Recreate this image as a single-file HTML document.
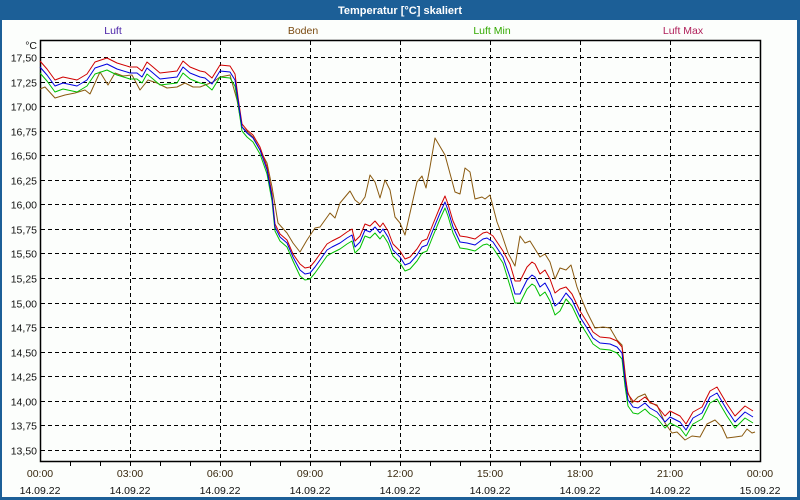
<!DOCTYPE html>
<html><head><meta charset="utf-8"><style>
html,body{margin:0;padding:0;width:800px;height:500px;overflow:hidden;background:#fff}
svg text{font-family:"Liberation Sans",sans-serif;font-size:10.5px}
</style></head><body>
<svg id="s" width="800" height="500" xmlns="http://www.w3.org/2000/svg">
<rect x="0" y="0" width="800" height="500" fill="#1c5f97"/>
<rect x="2" y="20" width="795" height="477" fill="#fcfefc"/>
<text x="400" y="14" fill="#fff" font-weight="bold" text-anchor="middle" style="font-size:11px">Temperatur [°C] skaliert</text>
<text x="113" y="34" fill="#4b22a8" text-anchor="middle">Luft</text>
<text x="303" y="34" fill="#7a4a10" text-anchor="middle">Boden</text>
<text x="492" y="34" fill="#33aa00" text-anchor="middle">Luft Min</text>
<text x="683" y="34" fill="#b0205a" text-anchor="middle">Luft Max</text>
<g id="grid" stroke="#000" stroke-width="1" stroke-dasharray="4,3" fill="none"></g>
<g id="lab"></g>
<rect x="40.5" y="40.5" width="720" height="421" fill="none" stroke="#000" stroke-width="1.5"/>
<g id="lines" fill="none" stroke-width="1" stroke-linejoin="round"></g>
</svg>
<script>
var ns="http://www.w3.org/2000/svg";
function el(p,t,a,txt){var e=document.createElementNS(ns,t);for(var k in a)e.setAttribute(k,a[k]);if(txt)e.textContent=txt;document.getElementById(p).appendChild(e);return e;}
var vals=["17,50","17,25","17,00","16,75","16,50","16,25","16,00","15,75","15,50","15,25","15,00","14,75","14,50","14,25","14,00","13,75","13,50"];
for(var i=0;i<17;i++){var y=Math.round(57+i*24.56)+0.5;el("grid","line",{x1:41,y1:y,x2:760,y2:y});el("lab","text",{x:37,y:y+4,"text-anchor":"end",fill:"#111"},vals[i]);}
el("lab","text",{x:37,y:49,"text-anchor":"end",fill:"#111"},"°C");
var times=["00:00","03:00","06:00","09:00","12:00","15:00","18:00","21:00","00:00"];
for(var j=0;j<9;j++){var x=40+j*90;if(j>0&&j<8)el("grid","line",{x1:x+0.5,y1:41,x2:x+0.5,y2:461});
el("lab","text",{x:x,y:477,"text-anchor":"middle",fill:"#3a2a10"},times[j]);
el("lab","text",{x:x,y:494,"text-anchor":"middle",fill:"#111"},j==8?"15.09.22":"14.09.22");}
for(var h=1;h<24;h++){var x=40+h*30+0.5;el("lab","line",{x1:x,y1:461,x2:x,y2:466,stroke:"#000"});}
var blue=[[40,67],[47,75],[55,86],[63,83],[77,86],[87,80],[95,68],[107,64],[117,69],[130,73],[137,73],[142,77],[147,68],[153,73],[160,79],[177,77],[183,67],[190,73],[200,77],[205,78],[212,84],[220,71],[230,72],[235,80],[238,100],[242,127],[247,133],[253,138],[260,150],[267,170],[272,197],[275,227],[280,237],[287,243],[293,257],[300,270],[305,274],[310,273],[315,267],[320,260],[327,250],[332,247],[340,243],[347,238],[352,235],[355,247],[360,242],[365,230],[370,232],[375,227],[380,233],[383,229],[388,237],[393,250],[400,257],[405,265],[410,263],[417,255],[422,247],[427,245],[433,230],[440,213],[445,202],[448,210],[453,227],[460,242],[467,243],[475,245],[483,239],[487,238],[493,242],[503,257],[510,277],[515,294],[520,294],[527,280],[532,275],[535,277],[540,287],[545,283],[550,292],[555,306],[560,302],[566,293],[572,300],[580,317],[587,328],[593,338],[600,343],[610,344],[617,347],[622,353],[625,380],[628,400],[633,407],[638,408],[645,403],[650,408],[657,412],[665,422],[670,417],[680,422],[686,430],[693,418],[702,413],[710,397],[717,393],[727,410],[735,422],[745,412],[753,417]];
var brown=[[40,89],[45,87],[55,98],[65,95],[75,93],[85,90],[90,94],[100,72],[108,85],[115,73],[123,76],[132,75],[140,90],[148,80],[157,83],[167,88],[177,87],[185,83],[193,87],[200,87],[213,82],[220,77],[230,75],[237,100],[242,127],[253,137],[260,150],[267,163],[272,187],[278,223],[287,233],[293,243],[300,252],[307,240],[315,228],[320,227],[330,213],[335,218],[340,203],[350,191],[355,200],[360,204],[365,197],[370,175],[375,182],[380,198],[385,180],[390,190],[395,217],[400,223],[405,235],[410,213],[417,182],[422,176],[426,188],[430,167],[435,138],[445,155],[455,192],[460,194],[465,168],[470,172],[475,199],[482,197],[485,199],[490,195],[497,222],[502,235],[508,253],[515,266],[520,236],[525,243],[530,241],[540,257],[545,254],[550,262],[555,279],[560,268],[566,270],[571,265],[577,287],[582,300],[587,312],[595,328],[603,327],[610,328],[617,340],[622,345],[627,390],[632,403],[638,397],[645,394],[650,403],[657,405],[665,423],[672,433],[677,432],[685,440],[692,436],[700,437],[707,424],[715,420],[722,427],[727,438],[735,437],[742,436],[747,429],[752,433],[755,432]];
function off(arr,f){return arr.map(function(p){return p[0]+","+(p[1]+f(p[0]))}).join(" ");}
el("lines","polyline",{points:off(brown,function(){return 0}),stroke:"#8a5a10"});
el("lines","polyline",{points:off(blue,function(x){return (x>505&&x<565)?9:(x>235&&x<300)?4:6}),stroke:"#00c000"});
el("lines","polyline",{points:off(blue,function(x){return (x>505&&x<565)?-13:(x>235&&x<300)?-3:-6}),stroke:"#d00000"});
el("lines","polyline",{points:off(blue,function(){return 0}),stroke:"#0000e0"});
</script>
</body></html>
